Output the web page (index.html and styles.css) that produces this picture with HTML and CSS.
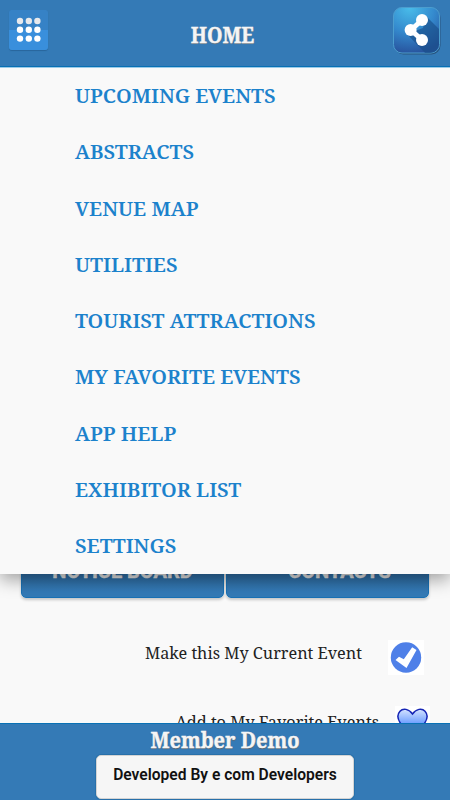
FILE: index.html
```
<!DOCTYPE html>
<html lang="en">
<head>
<meta charset="utf-8">
<title>Home</title>
<link rel="stylesheet" href="styles.css">
</head>
<body>
<div class="app">
  <header class="topbar">
    <button class="menu-button" aria-label="Menu">
      <svg width="39" height="40" viewBox="0 0 39 40" fill="#fff">
        <g fill="#e8e9ec"><circle cx="11" cy="11" r="3.2"/><circle cx="19.8" cy="11" r="3.2"/><circle cx="28.4" cy="11" r="3.2"/></g>
        <circle cx="11" cy="19.8" r="3.2"/><circle cx="19.8" cy="19.8" r="3.2"/><circle cx="28.4" cy="19.8" r="3.2"/>
        <circle cx="11" cy="28.6" r="3.2"/><circle cx="19.8" cy="28.6" r="3.2"/><circle cx="28.4" cy="28.6" r="3.2"/>
      </svg>
    </button>
    <h1 class="title">HOME</h1>
    <button class="share-button" aria-label="Share">
      <svg width="48" height="48" viewBox="0 0 48 48">
        <defs>
          <radialGradient id="tile" cx=".35" cy="0" r="1"><stop offset="0" stop-color="#49bdea"/><stop offset=".55" stop-color="#3489cd"/><stop offset="1" stop-color="#28559f"/></radialGradient>
          <clipPath id="clip"><rect x="1" y="1" width="45" height="45" rx="9"/></clipPath>
        </defs>
        <rect x="1.5" y="2" width="46" height="45.5" rx="9" fill="#28547f"/>
        <rect x=".5" y=".5" width="46" height="45.5" rx="8.5" fill="url(#tile)" stroke="#4c9dce"/>
        <path d="M33 9L48 24V48H34L14 27L30 21Z" fill="#194f89" opacity=".65" clip-path="url(#clip)"/>
        <path d="M29 13L18 23L29 33" fill="none" stroke="#fff" stroke-width="5" stroke-linejoin="round"/>
        <circle cx="29" cy="13" r="6" fill="#fff"/><circle cx="17.6" cy="23" r="6" fill="#fff"/><circle cx="29" cy="33" r="6" fill="#fff"/>
      </svg>
    </button>
  </header>

  <main class="content">
    <nav class="menu">
      <a class="item">UPCOMING EVENTS</a>
      <a class="item">ABSTRACTS</a>
      <a class="item">VENUE MAP</a>
      <a class="item">UTILITIES</a>
      <a class="item">TOURIST ATTRACTIONS</a>
      <a class="item">MY FAVORITE EVENTS</a>
      <a class="item">APP HELP</a>
      <a class="item">EXHIBITOR LIST</a>
      <a class="item">SETTINGS</a>
    </nav>
    <div class="tiles">
      <button class="tile notice"><span>NOTICE BOARD</span></button>
      <button class="tile contacts"><span>CONTACTS</span></button>
    </div>
    <div class="option current">
      <span class="label">Make this My Current Event</span>
      <svg width="36" height="35" viewBox="0 0 36 35"><rect width="36" height="35" fill="#fff"/><circle cx="18" cy="17.5" r="15.2" fill="#4f80e8"/><path d="M7.5 20L11 16.8L15.8 19.2L24.2 7.2L28.5 10L18.5 28Z" fill="#fff"/></svg>
    </div>
    <div class="option favorite">
      <span class="label">Add to My Favorite Events</span>
      <svg width="35" height="35" viewBox="0 0 35 35"><defs><linearGradient id="heart" x1="0" y1="0" x2="0" y2="1"><stop offset="0" stop-color="#d5e3ff"/><stop offset=".5" stop-color="#75a3ff"/><stop offset="1" stop-color="#376ce8"/></linearGradient></defs><rect width="35" height="35" fill="#fff"/><path d="M17.5 8C14 2.8 8 1.8 5 5.2C1.5 9 3 14 6 18L17.5 30L29 18C32 14 33.5 9 30 5.2C27 1.8 21 2.8 17.5 8Z" fill="url(#heart)" stroke="#1625b5" stroke-width="1.5"/></svg>
    </div>
  </main>

  <footer class="bottombar">
    <h2 class="member">Member Demo</h2>
    <button class="developer"><span>Developed By e com Developers</span></button>
  </footer>
</div>
</body>
</html>
```
FILE: styles.css
```
* { box-sizing: border-box; }
body { margin: 0; }
button { border: 0; padding: 0; }
svg { display: block; flex: none; }
.app {
  width: 450px; height: 800px; overflow: hidden;
  display: flex; flex-direction: column;
  background: #f9f9f9;
  font-family: "Noto Serif", "Droid Serif", "DejaVu Serif", serif;
}
.topbar {
  flex: none; height: 68px; padding: 7px 9px 0 9px;
  display: flex; justify-content: space-between; align-items: flex-start;
  background: #347ab6;
  border-bottom: 1px solid #9bcbe8;
  box-shadow: inset 0 -1px #0870b5;
}
.menu-button {
  width: 39px; height: 40px; margin-top: 3px; border-radius: 3px;
  background: linear-gradient(#3682c6 50%, #398fdc 50%);
  box-shadow: 0 1px 1px #28659c;
}
.share-button { width: 48px; height: 48px; background: none; }
.title {
  margin: 14px 0 0 4px; font-size: 21.5px; line-height: 28px;
  transform: scaleX(.92);
  color: #f5f5f5; -webkit-text-stroke: .4px #f5f5f5; text-shadow: 0 1px 1px #777;
}
.content { flex: none; height: 655px; overflow: hidden; display: flex; flex-direction: column; }
.menu {
  flex: none; height: 506px; padding-left: 75px;
  display: flex; flex-direction: column; position: relative; z-index: 1;
  background: #f9f9f9; box-shadow: 0 6px 16px rgba(0,0,0,.35);
}
.item {
  flex: none; height: 56.25px; line-height: 55px; white-space: nowrap;
  font-size: 20.4px; font-weight: 600; color: #1c82cc;
}
.tiles {
  flex: none; height: 60px; margin-top: -36px; padding: 0 21px;
  display: flex; gap: 2px;
}
.tile {
  flex: none; width: 203px; border: 1px solid #1971b5; border-radius: 5px;
  background: linear-gradient(#245a89 30%, #347ab6 90%);
  box-shadow: 0 2px 3px rgba(0,0,0,.2);
  color: #dedede; font: bold 20px/25px Roboto, sans-serif;
  -webkit-text-stroke: .5px #dedede;
  padding-top: 6px;
}
.contacts { padding-left: 24px; }
.option { flex: none; display: flex; justify-content: flex-end; align-items: flex-start; }
.label { white-space: nowrap; font-size: 16.25px; line-height: 26px; color: #222; }
.current { margin-top: 42px; padding-right: 26px; gap: 26px; }
.favorite { margin-top: 31px; padding-right: 20px; gap: 16px; }
.favorite .label { padding-top: 3px; }
.bottombar {
  flex: none; height: 77px; border-top: 1px solid #0871b5;
  display: flex; flex-direction: column; align-items: center;
  background: #347ab6;
}
.member {
  margin: 0; height: 31px; font-size: 22px; line-height: 31px;
  transform: scaleX(.91);
  color: #f5f5f5; -webkit-text-stroke: .4px #f5f5f5; text-shadow: 0 1px 1px #666;
}
.developer {
  width: 258px; height: 44px; padding-bottom: 4px; border: 1px solid #d4d4d4; border-radius: 5px;
  background: #f6f6f6; box-shadow: 0 0 0 1px #2870aa;
  color: #111; font: 600 15.6px/20px Roboto, sans-serif;
}
```
